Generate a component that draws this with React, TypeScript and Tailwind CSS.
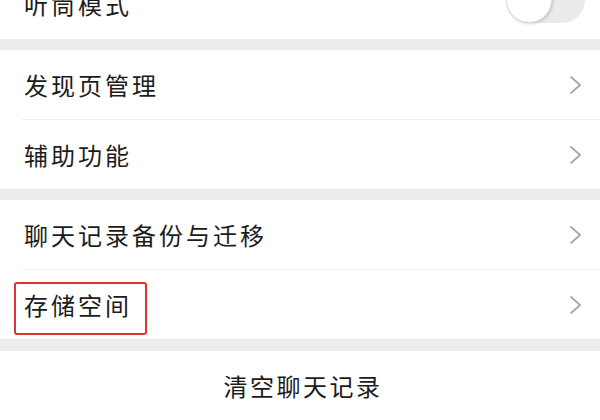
import React from "react";

const font = { fontFamily: '"Noto Sans CJK SC", "Noto Sans", sans-serif' };

function Chevron() {
  return (
    <svg width="14" height="20" viewBox="0 0 14 20" fill="none">
      <path d="M2 2 L11 10 L2 18" stroke="#a8a8a8" strokeWidth="1.8" strokeLinecap="round" strokeLinejoin="round" />
    </svg>
  );
}

function Row({ label, divider, boxed }: { label: string; divider?: boolean; boxed?: boolean }) {
  return (
    <div className="relative bg-white">
      <div className="flex h-[69px] items-center justify-between pl-[24px] pr-[17px]">
        {boxed ? (
          <span className="relative text-[24px] leading-none tracking-[3px] text-[#1b1b1b]">
            {label}
            <span className="pointer-events-none absolute left-[-10px] right-[-15px] top-[-11px] bottom-[-18px] rounded-[3px] border-2 border-[#e0332f]" />
          </span>
        ) : (
          <span className="text-[24px] leading-none tracking-[3px] text-[#1b1b1b]">{label}</span>
        )}
        <Chevron />
      </div>
      {divider && <div className="ml-[22px] h-px bg-[#efefef]" />}
    </div>
  );
}

export default function App() {
  return (
    <div className="h-[420px] w-[600px] overflow-hidden bg-[#ededed]" style={font}>
      <div className="mt-[-31px] flex h-[70px] items-center justify-between bg-white pl-[24px] pr-[15px]">
        <span className="text-[24px] leading-none tracking-[3px] text-[#1b1b1b]">听筒模式</span>
        <div className="relative mb-[8px] h-[46px] w-[79px] rounded-full bg-[#ebebeb]">
          <div className="absolute left-0 top-0 h-[46px] w-[46px] rounded-full border border-[#dcdcdc] bg-white shadow-[1px_1px_3px_rgba(0,0,0,0.18)]" />
        </div>
      </div>
      <div className="h-[11px]" />
      <Row label="发现页管理" divider />
      <Row label="辅助功能" />
      <div className="h-[11px]" />
      <Row label="聊天记录备份与迁移" divider />
      <Row label="存储空间" boxed />
      <div className="h-[12px]" />
      <div className="flex h-[70px] items-center justify-center bg-white">
        <span className="pl-[6px] text-[24px] leading-none tracking-[2.5px] text-[#1b1b1b]">清空聊天记录</span>
      </div>
    </div>
  );
}
